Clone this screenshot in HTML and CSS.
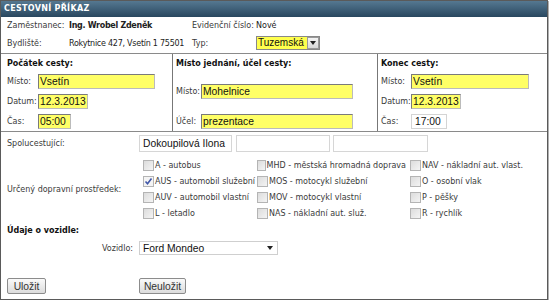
FILE: index.html
```html
<!DOCTYPE html>
<html lang="cs">
<head>
<meta charset="utf-8">
<link rel="stylesheet" href="styles.css">
</head>
<body>
<div class="panel">
  <div class="head">CESTOVNÍ PŘÍKAZ</div>
  <div class="info">
    <span>Zaměstnanec:</span><b class="val name">Ing. Wrobel Zdeněk</b><span>Evidenční číslo:</span><span class="val">Nové</span>
    <span>Bydliště:</span><span class="val addr">Rokytnice 427, Vsetín 1 75501</span><span>Typ:</span>
    <span class="typ"><span class="typ-t">Tuzemská</span><span class="typ-b"><svg width="6" height="4" viewBox="0 0 6 4"><path d="M0 0h6L3 4z" fill="#222"/></svg></span></span>
  </div>
  <div class="boxes">
    <div class="box b1">
      <div class="btitle">Počátek cesty:</div>
      <div class="frow"><span class="fl">Místo:</span><input class="in yel w117" value="Vsetín"></div>
      <div class="frow"><span class="fl">Datum:</span><input class="in yel w50" value="12.3.2013"></div>
      <div class="frow"><span class="fl">Čas:</span><input class="in yel w33" value="05:00"></div>
    </div>
    <div class="box b2">
      <div class="btitle">Místo jednání, účel cesty:</div>
      <div class="frow first"><span class="fl">Místo:</span><input class="in yel w152" value="Mohelnice"></div>
      <div class="frow second"><span class="fl">Účel:</span><input class="in yel w152" value="prezentace"></div>
    </div>
    <div class="box b3">
      <div class="btitle">Konec cesty:</div>
      <div class="frow"><span class="fl">Místo:</span><input class="in yel w118" value="Vsetín"></div>
      <div class="frow"><span class="fl">Datum:</span><input class="in yel w50" value="12.3.2013"></div>
      <div class="frow"><span class="fl">Čas:</span><input class="in w36" value="17:00"></div>
    </div>
  </div>
  <div class="lower">
    <div class="spol">
      <span class="lcol">Spolucestující:</span>
      <input class="in p1" value="Dokoupilová Ilona"><input class="in p2" value=""><input class="in p3" value="">
    </div>
    <div class="doprava">
      <span class="dlab">Určený dopravní prostředek:</span>
      <span class="cb"><i class="box-c"></i>A - autobus</span>
      <span class="cb"><i class="box-c"></i>MHD - městská hromadná doprava</span>
      <span class="cb"><i class="box-c"></i>NAV - nákladní aut. vlast.</span>
      <span class="cb"><i class="box-c on"><svg width="9" height="9" viewBox="0 0 9 9"><path d="M1.5 4.5l2 2.2L7.5 1.5" fill="none" stroke="#4057a8" stroke-width="1.6"/></svg></i>AUS - automobil služební</span>
      <span class="cb"><i class="box-c"></i>MOS - motocykl služební</span>
      <span class="cb"><i class="box-c"></i>O - osobní vlak</span>
      <span class="cb"><i class="box-c"></i>AUV - automobil vlastní</span>
      <span class="cb"><i class="box-c"></i>MOV - motocykl vlastní</span>
      <span class="cb"><i class="box-c"></i>P - pěšky</span>
      <span class="cb"><i class="box-c"></i>L - letadlo</span>
      <span class="cb"><i class="box-c"></i>NAS - nákladní aut. služ.</span>
      <span class="cb"><i class="box-c"></i>R - rychlík</span>
    </div>
    <div class="udaje">Údaje o vozidle:</div>
    <div class="voz">
      <span class="vlab">Vozidlo:</span>
      <span class="vsel"><span>Ford Mondeo</span><svg width="6" height="4" viewBox="0 0 6 4"><path d="M0 0h6L3 4z" fill="#222"/></svg></span>
    </div>
    <div class="btns">
      <button class="btn b-ul">Uložit</button>
      <button class="btn b-ne">Neuložit</button>
    </div>
  </div>
</div>
</body>
</html>
```
FILE: styles.css
```css
* { box-sizing: border-box; }
html, body { margin: 0; background: #fff; }
body {
  font-family: "DejaVu Sans", Verdana, sans-serif;
  font-size: 8px;
  color: #3a3a3a;
}
.panel {
  width: 548px;
  height: 300px;
  border: 1px solid #5a5a5a;
  box-shadow: 1px 1px 0 #b0b0b0;
  display: flex;
  flex-direction: column;
}
.head {
  height: 16px;
  flex: none;
  background: linear-gradient(#557891, #29475f);
  color: #fff;
  font-weight: bold;
  padding-left: 3px;
  line-height: 16px;
  letter-spacing: 0.3px;
}
.info {
  flex: none;
  display: grid;
  grid-template-columns: 62px 123px 64px auto;
  grid-template-rows: 16px 20px;
  align-items: center;
  padding-left: 6px;
  border-bottom: 1px solid #8a8a8a;
}
.info b { color: #111; }
.info .val { color: #222; }
.name { letter-spacing: -0.3px; }
.addr { letter-spacing: -0.25px; }
.typ {
  display: flex;
  width: 64px;
  height: 14px;
  border: 1px solid #888;
  background: #ffff4d;
  font-family: "Liberation Sans", Arial, sans-serif;
  font-size: 10px;
  color: #111;
}
.typ-t { flex: 1; line-height: 12px; padding-left: 1px; }
.typ-b {
  width: 12px;
  height: 12px;
  background: linear-gradient(#f4f4f4, #d8d8d8);
  border: 1px solid #999;
  display: flex;
  align-items: center;
  justify-content: center;
}
.boxes {
  flex: none;
  display: flex;
  height: 78px;
  border-bottom: 1px solid #8a8a8a;
}
.box { height: 77px; }
.b1 { width: 172px; border-right: 1px solid #777; padding-left: 6px; }
.b2 { width: 205px; border-right: 1px solid #777; padding-left: 3px; }
.b3 { flex: 1; padding-left: 3px; }
.btitle {
  height: 17px;
  padding-top: 3px;
  line-height: 14px;
  font-weight: bold;
  color: #111;
}
.frow {
  height: 20px;
  display: flex;
  align-items: center;
}
.b1 .fl { width: 31px; }
.b2 .fl { width: 25px; }
.b3 .fl { width: 30px; }
.b2 .first { margin-top: 10px; }
.b2 .second { margin-top: 10px; }
.in {
  height: 15px;
  border: 1px solid #bbb;
  border-top-color: #7a7a7a;
  border-left-color: #7a7a7a;
  background: #fff;
  font-family: "Liberation Sans", Arial, sans-serif;
  font-size: 10.3px;
  color: #111;
  padding: 0 1px;
  margin: 0;
  outline: none;
}
.yel { background: #ffff66; }
.w117 { width: 117px; }
.w118 { width: 118px; }
.w50 { width: 50px; }
.w33 { width: 33px; }
.w36 { width: 36px; border-color: #d4d4d4; padding-left: 3px; }
.w152 { width: 152px; }
.lower {
  flex: 1;
  padding-left: 6px;
  display: flex;
  flex-direction: column;
}
.spol {
  margin-top: 3px;
  height: 17px;
  display: flex;
  align-items: center;
}
.lcol { width: 132px; }
.spol .in { height: 17px; border-color: #d6d6d6; padding-left: 3px; }
.p1 { width: 93px; margin-right: 4px !important; }
.p2 { width: 94px; margin-right: 3px !important; }
.p3 { width: 95px; }
.doprava {
  margin-top: 5px;
  display: grid;
  grid-template-columns: 132px 114px 153px auto;
  grid-template-rows: repeat(4, 16px);
  align-items: center;
}
.dlab { grid-row: 1 / span 4; grid-column: 1; }
.cb { display: flex; align-items: center; padding-left: 4px; white-space: nowrap; }
.box-c {
  width: 11px;
  height: 11px;
  margin-right: 1px;
  border: 1px solid #b4b4b4;
  background: linear-gradient(135deg, #dcdcdc, #f4f4f4);
  display: flex;
  align-items: center;
  justify-content: center;
}
.box-c.on { background: #f4f4f4; }
.udaje {
  margin-top: 2px;
  height: 16px;
  line-height: 16px;
  font-weight: bold;
  color: #111;
}
.voz {
  margin-top: 2px;
  height: 14px;
  display: flex;
  align-items: center;
}
.vlab { width: 126px; text-align: right; margin-right: 6px; }
.vsel {
  width: 139px;
  height: 14px;
  border: 1px solid #cfcfcf;
  background: #fff;
  display: flex;
  align-items: center;
  justify-content: space-between;
  padding: 0 4px 0 3px;
  font-family: "Liberation Sans", Arial, sans-serif;
  font-size: 10.3px;
  color: #111;
}
.btns {
  margin-top: 23px;
  height: 16px;
  display: flex;
}
.btn {
  height: 16px;
  padding: 0;
  margin: 0;
  border: 1px solid #8c8c8c;
  border-radius: 2px;
  background: linear-gradient(#fafafa, #dcdcdc);
  font-family: "Liberation Sans", Arial, sans-serif;
  font-size: 10.3px;
  color: #333;
}
.b-ul { width: 39px; }
.b-ne { width: 47px; margin-left: 93px; }
```
